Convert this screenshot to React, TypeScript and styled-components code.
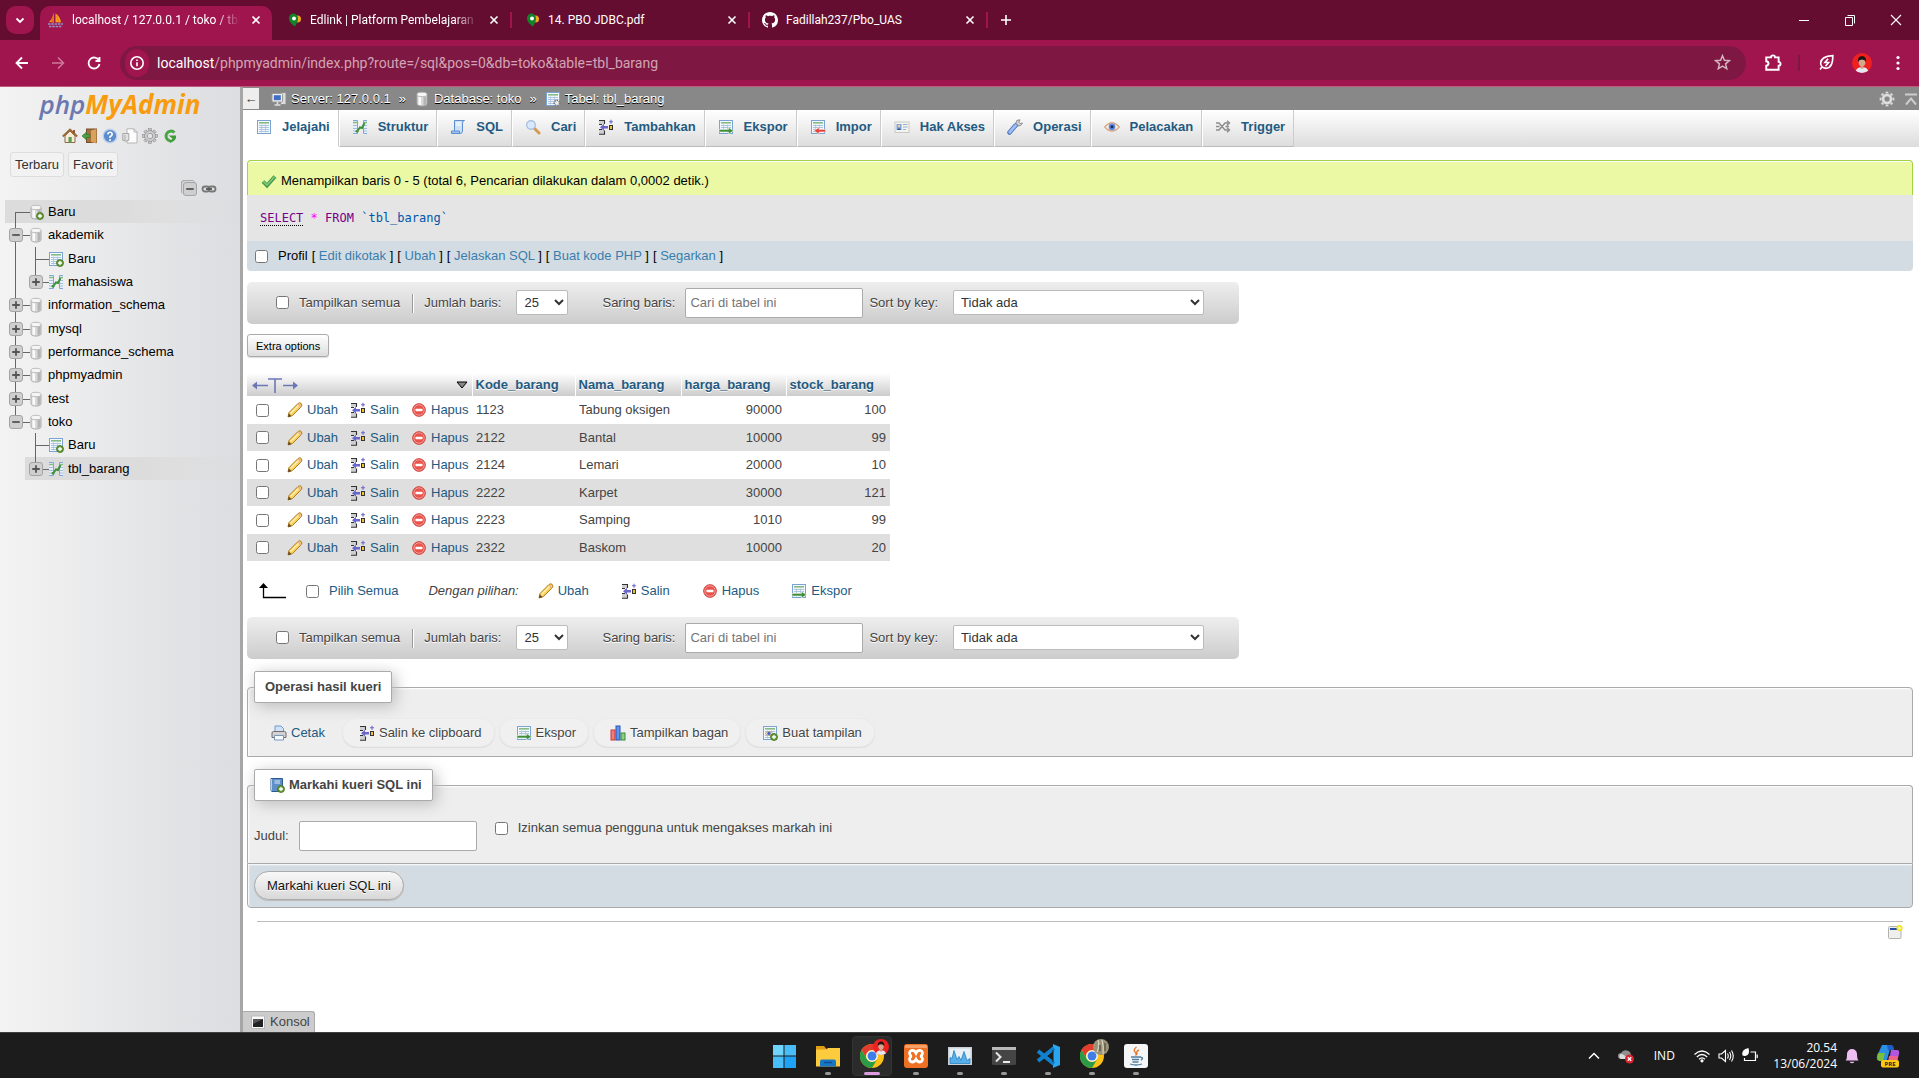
import React, { ReactNode } from "react";
import styled, { createGlobalStyle, css } from "styled-components";

const GlobalStyle = createGlobalStyle`
  * { box-sizing: border-box; }
  body {
    margin: 0;
    background: #fff;
    color: #444;
    font: 13px/18px "Liberation Sans", Arial, sans-serif;
  }
  button, input, select { font: inherit; color: inherit; margin: 0; }
  button { cursor: pointer; }
  a { color: #235a81; text-decoration: none; }
`;

/* ---------- icons ---------- */

type IconName =
  | "db" | "dbNew" | "table" | "tableNew" | "structure" | "sql" | "search" | "insert" | "export"
  | "import" | "rights" | "wrench" | "eye" | "trigger" | "server" | "tableGear" | "home" | "exit"
  | "help" | "docs" | "gear" | "reload" | "link" | "check" | "pencil" | "delete" | "print"
  | "chart" | "view" | "bookmark" | "console" | "window" | "gearLight" | "toTop";

const PlusBadge = () => (
  <g>
    <circle cx="12" cy="12" r="3.5" fill="#6a9c3c" stroke="#41731c" strokeWidth=".8" />
    <path d="M12 10v4M10 12h4" stroke="#fff" strokeWidth="1.3" />
  </g>
);

const Cylinder = () => (
  <g>
    <path d="M3 3.5v9.3c0 3 10 3 10 0V3.5z" fill="#d9d9d9" stroke="#a6a6a6" strokeWidth=".9" />
    <path d="M4.5 5.5v8q1.5.8 2.5.8v-8z" fill="#fafafa" />
    <path d="M9.5 6v8.2q1.8-.2 2.7-.9V5z" fill="#b4b4b4" />
    <ellipse cx="8" cy="3.5" rx="5" ry="2.2" fill="#f6f6f6" stroke="#b5b5b5" strokeWidth=".9" />
  </g>
);

const Sheet = () => (
  <g>
    <rect x="1.5" y="1.5" width="13" height="13" fill="#f4f8fc" stroke="#7ba3d3" />
    <rect x="3" y="3" width="10" height="1.6" fill="#86bb83" />
    <path d="M3 6.5h10M3 8.5h10M3 10.5h10M3 12.5h10" stroke="#a3bedd" strokeWidth=".9" />
    <path d="M5.500 5.500v8M9.500 5.500v8" stroke="#a3bedd" strokeWidth=".7" />
  </g>
);

const cogTeeth = [0, 45, 90, 135, 180, 225, 270, 315];
const Cog = ({ fill, stroke }: { fill: string; stroke: string }) => (
  <g>
    {cogTeeth.map((a) => (
      <rect key={a} x="6.6" y=".6" width="2.8" height="4" fill={fill} stroke={stroke} strokeWidth=".5" transform={`rotate(${a} 8 8)`} />
    ))}
    <circle cx="8" cy="8" r="4" fill="none" stroke={stroke} strokeWidth="3.4" />
    <circle cx="8" cy="8" r="4" fill="none" stroke={fill} strokeWidth="2.5" />
  </g>
);

const drawings: Record<IconName, ReactNode> = {
  db: <Cylinder />,
  dbNew: <g><Cylinder /><PlusBadge /></g>,
  table: <Sheet />,
  tableNew: <g><Sheet /><PlusBadge /></g>,
  structure: (
    <g>
      <path d="M1 1.5h4.500v13H1M15 1.5h-3.500v13H15" fill="#e6effa" stroke="#7fa8d8" />
      <path d="M1 3.500h4M12 3.500h3" stroke="#86bb83" strokeWidth="1.4" />
      <path d="M1 6.500h4M1 9.500h4M1 12h4M12 6.500h3M12 9.500h3M12 12h3" stroke="#a3bedd" />
      <path d="M5 12.500l3-4 2 .5 2.500-5" fill="none" stroke="#3f9139" strokeWidth="2" />
      <circle cx="5" cy="12.3" r="1.4" fill="#3f9139" />
    </g>
  ),
  sql: (
    <g>
      <path d="M4.500 1.500h10q-2 0-2 2.500v8q0 2.500-2.500 2.500h-8q2.500-.5 2.500-3z" fill="#cfe1f6" stroke="#5b8fd0" />
      <path d="M1.500 12h8v2.500h-8z" fill="#9fc2ec" stroke="#5b8fd0" />
      <path d="M6 4h5M6 6h5" stroke="#fff" />
    </g>
  ),
  search: (
    <g>
      <path d="M9.500 9.500l4.500 4.500" stroke="#d59a52" strokeWidth="3" strokeLinecap="round" />
      <circle cx="6" cy="6" r="4.3" fill="#d9e9fb" stroke="#a9c0de" strokeWidth="1.4" />
    </g>
  ),
  insert: (
    <g>
      <path d="M1 1h5v4H1zM1 11h5v4H1z" fill="#cfcfcf" />
      <path d="M1 1.500h6M6.500 1v4M1 5.500h3M1 10.500h3M6.500 11.500v4M1 15.300h6" fill="none" stroke="#333" strokeWidth="1.1" />
      <path d="M2 8.200l4-3.400v2.200h4v2.500H6v2.200z" fill="#6a66cc" />
      <rect x="11.500" y="6.500" width="3" height="4" fill="#f8c22e" stroke="#333" />
      <path d="M13 .8v4M11 2.800h4" stroke="#6a66cc" strokeWidth="1.1" />
    </g>
  ),
  export: (
    <g>
      <Sheet />
      <path d="M1 10.500h9.500V8.500l5 3.300-5 3.200v-2H1z" fill="#3f8f3b" stroke="#e7f2e2" strokeWidth=".6" />
    </g>
  ),
  import: (
    <g>
      <Sheet />
      <path d="M15.500 10.500H9V8.500l-5 3.300L9 15v-2h6.500z" fill="#e5433c" stroke="#fbe3e1" strokeWidth=".6" />
    </g>
  ),
  rights: (
    <g>
      <rect x="1" y="3" width="14" height="10.500" fill="#f3f3f1" stroke="#c9c9c4" />
      <rect x="2.500" y="5" width="5" height="6" fill="#78a4d9" />
      <circle cx="5" cy="7" r="1.3" fill="#f0c7a3" />
      <path d="M3 11q2-3.500 4 0z" fill="#2c5b9a" />
      <path d="M9 5.500h4.500M9 8h4.500M9 10.500h3" stroke="#97b3cf" />
    </g>
  ),
  wrench: (
    <g>
      <path d="M10 7l3.500-.5L15.500 4l-2.300.6-1.400-1.400L13 .8 9.800 1.500 8.500 5z" fill="#d4d4d4" stroke="#8b8b8b" />
      <path d="M2.500 13.500l6-7" stroke="#3f69b8" strokeWidth="4.4" strokeLinecap="round" />
      <path d="M2.700 13.200l5.800-6.700" stroke="#9dbcf2" strokeWidth="3" strokeLinecap="round" />
    </g>
  ),
  eye: (
    <g>
      <path d="M.8 8Q8-.5 15.200 8 8 16 .8 8z" fill="#fbf4ee" stroke="#d9a784" strokeWidth="1.4" />
      <circle cx="8" cy="7.800" r="3.4" fill="#5d86dd" />
      <circle cx="8" cy="7.800" r="1.5" fill="#1d2b4e" />
    </g>
  ),
  trigger: (
    <g fill="none" stroke="#8c8c8c" strokeWidth="1.4">
      <path d="M1 4h3l6 7h4M1 11h3l6-7h4" />
      <path d="M12 1.800L14.500 4 12 6.200M12 8.800l2.500 2.200-2.500 2.200M1 7.500h3.500M10.500 7.500H14" />
    </g>
  ),
  server: (
    <g>
      <rect x="9.500" y="1.500" width="5.500" height="12" fill="#dcdcdc" stroke="#8e8e8e" />
      <rect x="1" y="2.500" width="10.500" height="8.500" rx="1" fill="#f1f1f1" stroke="#9a9a9a" />
      <rect x="2.800" y="4.200" width="7" height="5" fill="#3f6fc4" />
      <path d="M3.500 14h6M6.500 11v3" stroke="#ddd" strokeWidth="1.6" />
    </g>
  ),
  tableGear: (
    <g>
      <Sheet />
      <circle cx="12" cy="12" r="2.7" fill="#eee" stroke="#777" strokeWidth="1.7" strokeDasharray="1.6 .8" />
    </g>
  ),
  home: (
    <g>
      <path d="M3 8v6.500h10V8L8 3z" fill="#f5ecd9" stroke="#8a6d46" />
      <path d="M.8 8.500L8 1.500l7.200 7" fill="none" stroke="#9c6a3a" strokeWidth="1.9" />
      <rect x="6.500" y="9" width="3.200" height="5.500" fill="#5f9d4e" />
      <path d="M12 2v3" stroke="#8a4a2a" strokeWidth="1.8" />
    </g>
  ),
  exit: (
    <g>
      <rect x="4.500" y="1" width="10" height="13.500" fill="#a86f3d" stroke="#77502a" />
      <path d="M9 2.500l5.500-1.500v14.500L9 14z" fill="#d9a25c" />
      <path d="M0 8l4.500-4v2.500H8v3H4.500V12z" fill="#4aa043" stroke="#2f7129" strokeWidth=".6" />
    </g>
  ),
  help: (
    <g>
      <circle cx="8" cy="8" r="6.8" fill="#5c8bd0" stroke="#bdd0ea" strokeWidth="1.4" />
      <path d="M5.800 6.300Q6 4.200 8 4.200t2.200 2Q10.200 7.500 8 8.700V10" fill="none" stroke="#fff" strokeWidth="1.6" />
      <circle cx="8" cy="12" r="1" fill="#fff" />
    </g>
  ),
  docs: (
    <g>
      <path d="M5 .8h7l3 3V15H5z" fill="#fcfcfc" stroke="#b5b5b5" />
      <path d="M12 .8V4h3" fill="none" stroke="#b5b5b5" />
      <path d="M.8 5.500h6v6.800q-3 1.500-6 0z" fill="#e2e2e2" stroke="#a6a6a6" />
      <path d="M3 7v5" stroke="#aaa" />
    </g>
  ),
  gear: <Cog fill="#c9c9c9" stroke="#7f7f7f" />,
  gearLight: <Cog fill="#dedede" stroke="#9a9a9a" />,
  reload: (
    <g>
      <path d="M12.500 4.500A5 5 0 1 0 8 13" fill="none" stroke="#4aa544" strokeWidth="3" />
      <path d="M6.500 7.500H14q1 5-6 7.500v-3q2 0 2.500-1.500z" fill="#3f9a39" />
    </g>
  ),
  link: (
    <g fill="none" stroke="#777" strokeWidth="1.8">
      <rect x="1.500" y="5.500" width="7" height="5" rx="2.5" />
      <rect x="7.500" y="5.500" width="7" height="5" rx="2.5" />
      <path d="M5 8h6" stroke="#555" />
    </g>
  ),
  check: (
    <g>
      <path d="M2 8.500l4 4 8-9" fill="none" stroke="#3e9440" strokeWidth="3.8" />
      <path d="M2.300 8.500L6 12l7.700-8.300" fill="none" stroke="#7cc77a" strokeWidth="1.8" />
    </g>
  ),
  pencil: (
    <g>
      <path d="M1 15l1-4.500L11 1.500q2-1.500 3.200 0t.3 3L5.500 13.500z" fill="#f7cf5a" stroke="#b07d1d" />
      <path d="M3.500 11.500L12 3" stroke="#fdeeb0" strokeWidth="1.6" />
      <path d="M1 15l.8-3.500 2.700 2.700z" fill="#5b4526" />
      <path d="M11 2l3 3" stroke="#e8b0a0" strokeWidth="1.3" />
    </g>
  ),
  delete: (
    <g>
      <circle cx="8" cy="8" r="6.3" fill="#e8534c" stroke="#cf3a34" />
      <circle cx="8" cy="8" r="5.2" fill="none" stroke="#f5a39e" strokeWidth=".9" />
      <rect x="4.500" y="6.800" width="7" height="2.400" rx=".6" fill="#fff" />
    </g>
  ),
  print: (
    <g>
      <path d="M4 1h6l2.500 2.500V8H4z" fill="#cfe2f8" stroke="#6e98cc" />
      <path d="M1 8q0-1.500 1.500-1.500h11Q15 6.500 15 8v4.500H1z" fill="#d2d2d2" stroke="#6f6f6f" />
      <path d="M3.500 10.500h9V15h-9z" fill="#f7fbff" stroke="#7b98b8" />
    </g>
  ),
  chart: (
    <g>
      <rect x="1" y="5" width="4" height="10" fill="#ef7d7d" stroke="#c33c3c" />
      <rect x="6" y="1" width="4" height="14" fill="#5e93ee" stroke="#2455b5" />
      <rect x="11" y="8" width="4" height="7" fill="#8ccf86" stroke="#3d8a37" />
    </g>
  ),
  view: (
    <g>
      <Sheet />
      <path d="M3 8.500q4-4 8.500 0-4.500 4-8.500 0z" fill="#f6e2d2" stroke="#c89b7a" strokeWidth=".8" />
      <circle cx="7" cy="8.400" r="1.700" fill="#3b67c0" />
      <PlusBadge />
    </g>
  ),
  bookmark: (
    <g>
      <path d="M2 1.500h11.500v13H3q-1-.3-1-1.500z" fill="#5f8fc7" stroke="#2f5a8f" />
      <path d="M2.500 2v11.500" stroke="#b7d0ee" />
      <path d="M5.500 4h5.500M5.500 6h5.500" stroke="#dce9f8" />
      <PlusBadge />
    </g>
  ),
  console: (
    <g>
      <rect x="1.500" y="2" width="13" height="12.500" fill="#fafafa" stroke="#b9b9b9" />
      <rect x="3" y="5" width="10" height="8" fill="#222" />
      <path d="M3 5h10L3 10z" fill="#555" />
    </g>
  ),
  window: (
    <g>
      <rect x="1.500" y="2.500" width="12.500" height="12" rx="1" fill="#efefef" stroke="#b3b3ae" />
      <rect x="3" y="4" width="8" height="2" fill="#2350a8" />
      <circle cx="12.500" cy="4" r="2.300" fill="#fff9b0" stroke="#f3e51c" strokeWidth="1.6" />
    </g>
  ),
  toTop: <path d="M2 3.500h12M3 13.500L8 7.500l5 6" fill="none" stroke="#ccc" strokeWidth="2" />,
};

const Svg = styled.svg`
  display: block;
  flex: none;
`;

const Icon = ({ name, size = 16 }: { name: IconName; size?: number }) => (
  <Svg width={size} height={size} viewBox="0 0 16 16" aria-hidden="true">{drawings[name]}</Svg>
);

/* ---------- browser chrome ---------- */

const Screen = styled.div`
  display: flex;
  flex-direction: column;
  min-height: 100vh;
`;

const chromeFont = css`
  font-family: Roboto, "Noto Sans", sans-serif;
`;

const TabStrip = styled.div`
  ${chromeFont}
  display: flex;
  align-items: flex-end;
  height: 40px;
  padding-left: 6px;
  background: #650d31;
  color: #fff;
  font-size: 12px;
`;

const PlainButton = styled.button<{ $w?: number; $h?: number }>`
  display: flex;
  align-items: center;
  justify-content: center;
  flex: none;
  width: ${(p) => p.$w ?? 16}px;
  height: ${(p) => p.$h ?? 16}px;
  padding: 0;
  border: 0;
  background: none;
  color: inherit;
`;

const TabSearch = styled(PlainButton)`
  align-self: center;
  margin-right: 2px;
  border-radius: 10px;
  background: #a1154f;
`;

const BrowserTab = styled.div<{ $active?: boolean; $line?: boolean }>`
  position: relative;
  display: flex;
  align-items: center;
  gap: 8px;
  width: 238px;
  height: 34px;
  padding: 0 10px 6px 12px;
  &::before {
    content: "";
    position: absolute;
    z-index: 0;
    inset: 0 2px 0 4px;
    border-radius: 10px 10px 0 0;
    background: ${(p) => (p.$active ? "#a1154f" : "none")};
  }
  &::after {
    content: "";
    position: absolute;
    right: 0;
    top: 6px;
    width: 2px;
    height: 16px;
    background: ${(p) => (p.$line ? "#a1154f" : "none")};
  }
  > * { position: relative; }
`;

const TabTitle = styled.span<{ $fade?: boolean }>`
  flex: 1;
  min-width: 0;
  white-space: nowrap;
  line-height: 18px;
  ${(p) => p.$fade && css`mask-image: linear-gradient(90deg, #000 86%, transparent);`}
`;

const WindowControls = styled.div`
  display: flex;
  margin-left: auto;
  align-self: flex-start;
`;

const Toolbar = styled.div`
  ${chromeFont}
  display: flex;
  align-items: center;
  height: 47px;
  padding: 0 3px 1px 4px;
  border-bottom: 1px solid #c2577f;
  background: #a1154f;
  color: #fff;
`;

const Omnibox = styled.div`
  display: flex;
  align-items: center;
  flex: 1;
  height: 34px;
  margin: 0 9px 0 8px;
  padding: 0 13px 0 5px;
  border-radius: 17px;
  background: #7e1842;
`;

const InfoDot = styled(PlainButton)`
  border-radius: 14px;
  background: #a1154f;
`;

const Address = styled.div`
  flex: 1;
  padding-left: 8px;
  color: #d3a3b5;
  font-size: 14px;
  line-height: 20px;
  b { color: #fff; font-weight: 400; }
`;

const ToolbarLine = styled.span`
  width: 2px;
  height: 16px;
  margin: 0 8px 0 7px;
  background: #7e1842;
`;

const stroke = (d: string, size = 16, width = 1.6, color = "currentColor") => (
  <Svg width={size} height={size} viewBox="0 0 16 16" fill="none" stroke={color} strokeWidth={width} aria-hidden="true"><path d={d} /></Svg>
);

const Sail = () => (
  <Svg width="16" height="16" viewBox="0 0 16 16" aria-hidden="true">
    <path d="M6 .5v10L1 10Q5 6 6 .5zM7.500 1.500Q12 4 13 10.500l-5.500-.3z" fill="#f6a21a" />
    <path d="M5.500 3v7L3 9.700zM8.500 4l2 6" fill="#e0691b" stroke="#e0691b" strokeWidth=".6" />
    <path d="M0 12h15M1 14.500h13" stroke="#8e93c9" strokeWidth="1.6" strokeDasharray="2.5 .8" />
  </Svg>
);

const EdPin = () => (
  <Svg width="16" height="16" viewBox="0 0 16 16" aria-hidden="true">
    <circle cx="11.500" cy="7" r="3.5" fill="#f2a51e" />
    <path d="M7 1.500a5 5 0 0 1 5 5q0 3-3 8-6-4-6-8a4.500 4.500 0 0 1 4-5z" fill="#12822b" />
    <circle cx="8" cy="6.500" r="2" fill="#fff" />
  </Svg>
);

const OctoCat = () => (
  <Svg width="16" height="16" viewBox="0 0 16 16" fill="#fff" aria-hidden="true">
    <path d="M8 0C3.580 0 0 3.580 0 8c0 3.540 2.290 6.530 5.470 7.590.4.070.55-.17.55-.38 0-.19-.01-.82-.01-1.490-2.010.37-2.530-.49-2.690-.94-.09-.23-.48-.94-.82-1.130-.28-.15-.68-.52-.01-.53.63-.01 1.080.58 1.230.82.72 1.210 1.870.87 2.330.66.07-.52.28-.87.51-1.070-1.780-.2-3.640-.89-3.640-3.950 0-.87.31-1.590.82-2.150-.08-.2-.36-1.020.08-2.120 0 0 .67-.21 2.200.82.64-.18 1.320-.27 2-.27s1.360.09 2 .27c1.530-1.040 2.200-.82 2.200-.82.44 1.100.16 1.920.08 2.120.51.56.82 1.270.82 2.150 0 3.070-1.870 3.750-3.650 3.950.29.25.54.73.54 1.480 0 1.070-.01 1.930-.01 2.200 0 .21.15.46.55.38A8.010 8.010 0 0 0 16 8c0-4.420-3.580-8-8-8z" />
  </Svg>
);

const Portrait = ({ size = 20 }: { size?: number }) => (
  <Svg width={size} height={size} viewBox="0 0 20 20" aria-hidden="true">
    <clipPath id={`portrait${size}`}><circle cx="10" cy="10" r="10" /></clipPath>
    <g clipPath={`url(#portrait${size})`}>
      <rect width="20" height="20" fill="#ee2020" />
      <path d="M3 20q1-6 7-6t7 6z" fill="#e6e8f0" />
      <rect x="8.500" y="11" width="3" height="4.500" fill="#c99a80" />
      <ellipse cx="10" cy="9" rx="3.400" ry="4.300" fill="#d5a88e" />
      <path d="M6 9Q5.500 3 10 3t4 6Q13 6.500 10 6.500T6 9z" fill="#1d1513" />
    </g>
  </Svg>
);

const browserTabs: { title: string; icon: ReactNode; active?: boolean; line?: boolean; fade?: boolean }[] = [
  { title: "localhost / 127.0.0.1 / toko / tbl_", icon: <Sail />, active: true, fade: true },
  { title: "Edlink | Platform Pembelajaran I", icon: <EdPin />, line: true, fade: true },
  { title: "14. PBO JDBC.pdf", icon: <EdPin />, line: true },
  { title: "Fadillah237/Pbo_UAS", icon: <OctoCat />, line: true },
];

const BrowserChrome = () => (
  <header>
    <TabStrip>
      <TabSearch $w={28} $h={28} aria-label="Search tabs">{stroke("M4.500 6.500L8 10l3.500-3.500", 16, 1.8)}</TabSearch>
      {browserTabs.map((t) => (
        <BrowserTab key={t.title} $active={t.active} $line={t.line}>
          {t.icon}
          <TabTitle $fade={t.fade}>{t.title}</TabTitle>
          <PlainButton aria-label="Close tab">{stroke("M4.500 4.500l7 7M11.500 4.500l-7 7", 16, 1.6)}</PlainButton>
        </BrowserTab>
      ))}
      <PlainButton $w={36} $h={40} aria-label="New tab">{stroke("M8 3v10M3 8h10", 16, 1.6)}</PlainButton>
      <WindowControls>
        <PlainButton $w={46} $h={40} aria-label="Minimize">{stroke("M3 8.500h10", 16, 1)}</PlainButton>
        <PlainButton $w={46} $h={40} aria-label="Restore">{stroke("M3.500 5.500h7v8h-7zM5.500 3.500h7v8", 16, 1)}</PlainButton>
        <PlainButton $w={46} $h={40} aria-label="Close">{stroke("M3 3l10 10M13 3L3 13", 16, 1.1)}</PlainButton>
      </WindowControls>
    </TabStrip>
    <Toolbar>
      <PlainButton $w={36} $h={34} aria-label="Back">{stroke("M14 8H3M8 2.500L2.500 8 8 13.500", 16, 1.8)}</PlainButton>
      <PlainButton $w={36} $h={34} aria-label="Forward">{stroke("M2 8h11M8 2.500L13.500 8 8 13.500", 16, 1.5, "#cd7a9b")}</PlainButton>
      <PlainButton $w={36} $h={34} aria-label="Reload">{stroke("M13 5.500A5.500 5.500 0 1 0 13.500 9M13.500 2v4h-4", 16, 1.8)}</PlainButton>
      <Omnibox>
        <InfoDot $w={24} $h={28} aria-label="Site information">
          <Svg width="16" height="16" viewBox="0 0 16 16" fill="none" stroke="#fff" strokeWidth="1.6"><circle cx="8" cy="8" r="6.2" /><path d="M8 7.200v4M8 4.500v1.500" /></Svg>
        </InfoDot>
        <Address><b>localhost</b>/phpmyadmin/index.php?route=/sql&amp;pos=0&amp;db=toko&amp;table=tbl_barang</Address>
        <PlainButton $w={22} $h={22} aria-label="Bookmark">
          {stroke("M8 1.600l1.800 4.300 4.700.4-3.600 3 1.100 4.600L8 11.400l-4 2.500 1.100-4.600-3.600-3 4.700-.4z", 17, 1.4, "#d5b4c1")}
        </PlainButton>
      </Omnibox>
      <PlainButton $w={36} $h={34} aria-label="Extensions">
        {stroke("M2 3h4.200a1.800 1.800 0 0 1 3.600 0H13v4a1.700 1.700 0 0 1 0 3.400V14H2v-3.500q2-.3 2-2T2 6.500z", 18, 1.7)}
      </PlainButton>
      <ToolbarLine />
      <PlainButton $w={36} $h={34} aria-label="Energy saver">
        {stroke("M14 1.500Q3 2 2.500 8.500 2.500 13 7.500 13.500 14 13.500 14 1.500zM3.500 12.500L2 14.500M9.500 4.500l-3 3.500h3.500l-3 3.500", 17, 1.5)}
      </PlainButton>
      <PlainButton $w={36} $h={34} aria-label="Profile"><Portrait /></PlainButton>
      <PlainButton $w={36} $h={34} aria-label="Menu">
        <Svg width="4" height="16" viewBox="0 0 4 16" fill="#fff"><circle cx="2" cy="2.500" r="1.6" /><circle cx="2" cy="8" r="1.6" /><circle cx="2" cy="13.500" r="1.6" /></Svg>
      </PlainButton>
    </Toolbar>
  </header>
);

/* ---------- navigation panel ---------- */

const Body = styled.div`
  display: flex;
  flex: 1;
`;

const Sidebar = styled.aside`
  flex: none;
  width: 243px;
  border-right: 3px solid #a6a6a6;
  background: linear-gradient(90deg, #f3f3f3, #dcdde0);
  color: #000;
`;

const Logo = styled.a`
  display: block;
  height: 39px;
  text-align: center;
  color: #f89c0e;
  font: italic 700 26px/34px "Open Sans", "Noto Sans", sans-serif;
  span { color: #6c78af; font-weight: 600; }
`;

const QuickLinks = styled.nav`
  display: flex;
  justify-content: center;
  gap: 4px;
  margin-top: 2px;
  a { display: block; }
`;

const RecentBar = styled.div`
  display: flex;
  gap: 4px;
  margin: 8px 0 0 10px;
`;

const SoftButton = styled.button`
  height: 25px;
  padding: 0 4px;
  border: 1px solid #ddd;
  border-radius: 3px;
  background: #f2f2f2;
  color: #333;
`;

const TreeTools = styled.div`
  display: flex;
  align-items: center;
  justify-content: flex-end;
  gap: 4px;
  height: 23px;
  padding-right: 23px;
`;

const Fold = styled.button<{ $stack?: boolean }>`
  display: flex;
  align-items: center;
  justify-content: center;
  width: 14px;
  height: 14px;
  padding: 0;
  border: 1px solid #a4a4a4;
  border-radius: 3px;
  background: #cfcfcf;
  color: #555;
  ${(p) => p.$stack && css`box-shadow: -1px -1px 0 #d8d8d8, -2px -2px 0 #aaa;`}
`;

const Tree = styled.ul`
  margin: 0;
  padding: 0 0 0 5px;
  list-style: none;
`;

const TreeRow = styled.li<{ $mark?: boolean; $child?: boolean }>`
  display: flex;
  align-items: center;
  height: 23px;
  padding-left: 1px;
  ${(p) => p.$mark && css`
    background: linear-gradient(90deg, #dcdcdc, #dcdcdc 50%, transparent) no-repeat ${p.$child ? 20 : 0}px 0;
  `}
  &:nth-child(3n + 2) { height: 24px; }
  a { color: #000; margin-left: 4px; }
`;

type RailKind = "top" | "mid" | "end" | "pass" | "none";

const railSpan: Record<RailKind, string> = {
  top: "50% auto 0",
  mid: "0 auto 0",
  pass: "0 auto 0",
  end: "0 auto 50%",
  none: "0",
};

/* One indent step of the tree, with its vertical and horizontal connector lines */
const Rail = styled.span<{ $kind: RailKind }>`
  position: relative;
  display: flex;
  align-items: center;
  justify-content: center;
  flex: none;
  align-self: stretch;
  width: 20px;
  &::before {
    content: "";
    position: absolute;
    inset: ${(p) => railSpan[p.$kind]};
    left: 9px;
    border-left: ${(p) => (p.$kind === "none" ? 0 : 1)}px solid #666;
  }
  &::after {
    content: "";
    position: absolute;
    top: 50%;
    left: 9px;
    width: 15px;
    border-top: ${(p) => (p.$kind === "none" || p.$kind === "pass" ? 0 : 1)}px solid #666;
  }
  ${Fold} { position: relative; z-index: 1; }
`;

const TreeIcon = styled.span`
  position: relative;
  padding-left: 2px;
`;

const FoldSign = ({ open }: { open?: boolean }) => stroke(open ? "M3 8h10" : "M3 8h10M8 3v10", 12, 2.4);

type Node = { label: string; icon: IconName; rails: RailKind[]; fold?: "open" | "closed"; mark?: boolean };

const nodes: Node[] = [
  { label: "Baru", icon: "dbNew", rails: ["top"], mark: true },
  { label: "akademik", icon: "db", rails: ["mid"], fold: "open" },
  { label: "Baru", icon: "tableNew", rails: ["pass", "mid"] },
  { label: "mahasiswa", icon: "structure", rails: ["pass", "end"], fold: "closed" },
  { label: "information_schema", icon: "db", rails: ["mid"], fold: "closed" },
  { label: "mysql", icon: "db", rails: ["mid"], fold: "closed" },
  { label: "performance_schema", icon: "db", rails: ["mid"], fold: "closed" },
  { label: "phpmyadmin", icon: "db", rails: ["mid"], fold: "closed" },
  { label: "test", icon: "db", rails: ["mid"], fold: "closed" },
  { label: "toko", icon: "db", rails: ["end"], fold: "open" },
  { label: "Baru", icon: "tableNew", rails: ["none", "mid"] },
  { label: "tbl_barang", icon: "structure", rails: ["none", "end"], fold: "closed", mark: true },
];

const Navigation = () => (
  <Sidebar>
    <Logo href="#home"><span>php</span>MyAdmin</Logo>
    <QuickLinks>
      {(["home", "exit", "help", "docs", "gear", "reload"] as IconName[]).map((n) => (
        <a key={n} href={`#${n}`} aria-label={n}><Icon name={n} /></a>
      ))}
    </QuickLinks>
    <RecentBar>
      <SoftButton>Terbaru</SoftButton>
      <SoftButton>Favorit</SoftButton>
    </RecentBar>
    <TreeTools>
      <Fold $stack aria-label="Collapse all"><FoldSign open /></Fold>
      <PlainButton aria-label="Unlink from main panel"><Icon name="link" /></PlainButton>
    </TreeTools>
    <Tree>
      {nodes.map((n, i) => (
        <TreeRow key={i} $mark={n.mark} $child={n.rails.length > 1}>
          {n.rails.map((r, j) => (
            <Rail key={j} $kind={r}>
              {n.fold && j === n.rails.length - 1 && (
                <Fold aria-label={`Toggle ${n.label}`}><FoldSign open={n.fold === "open"} /></Fold>
              )}
            </Rail>
          ))}
          <TreeIcon><Icon name={n.icon} /></TreeIcon>
          <a href={`#${n.label}`}>{n.label}</a>
        </TreeRow>
      ))}
    </Tree>
  </Sidebar>
);

/* ---------- main panel ---------- */

const Main = styled.main`
  display: flex;
  flex-direction: column;
  flex: 1;
  min-width: 0;
`;

const Breadcrumb = styled.div`
  display: flex;
  align-items: center;
  gap: 4px;
  height: 23px;
  background: #888;
  color: #fff;
  text-shadow: 0 1px 0 #000;
  a { display: flex; align-items: center; gap: 4px; color: inherit; }
`;

const BackToggle = styled.button`
  width: 16px;
  height: 21px;
  margin-right: 8px;
  padding: 0;
  border: 0;
  background: #eee;
  color: #333;
  line-height: 20px;
`;

const Angle = styled.span`
  padding: 0 4px;
`;

const BarTools = styled.div`
  display: flex;
  gap: 8px;
  margin-left: auto;
`;

const TopMenu = styled.nav`
  display: flex;
  height: 37px;
  background: linear-gradient(#fff, #dcdcdc);
`;

const MenuTab = styled.a<{ $active?: boolean }>`
  display: flex;
  align-items: center;
  gap: 10px;
  padding: 0 8px 2px 12px;
  border-left: 1px solid ${(p) => (p.$active ? "transparent" : "#fff")};
  border-right: 1px solid #ccc;
  border-bottom: 1px solid ${(p) => (p.$active ? "#fff" : "#bbb")};
  background: ${(p) => (p.$active ? "#fff" : "none")};
  font-weight: 700;
`;

const Content = styled.div`
  padding: 13px 6px 0 4px;
`;

const Success = styled.div`
  display: flex;
  align-items: center;
  gap: 4px;
  height: 35px;
  padding: 6px 0 0 13px;
  border: solid #a2d246;
  border-width: 1px 1px 0;
  border-radius: 4px 4px 0 0;
  background: #ebf8a4;
  box-shadow: inset 0 1px 1px #fff;
  color: #000;
`;

const SqlBox = styled.pre`
  margin: 0;
  height: 46px;
  padding: 14px 13px;
  background: #e5e5e5;
  font: 12px/18px "DejaVu Sans Mono", monospace;
  color: #708;
  a { color: #708; border-bottom: 1px dotted #000; }
  i { color: #f0f; font-style: normal; }
  b { color: #05a; font-weight: 400; }
`;

const SqlTools = styled.div`
  display: flex;
  align-items: center;
  gap: 4px;
  height: 30px;
  padding-left: 8px;
  border-radius: 0 0 4px 4px;
  background: #d3dce3;
  color: #000;
  a { color: #3a7ead; }
  label { display: flex; align-items: center; gap: 10px; }
`;

const Check = styled.input.attrs({ type: "checkbox" })`
  flex: none;
  width: 13px;
  height: 13px;
`;

const NavForm = styled.form`
  display: flex;
  align-items: center;
  width: 992px;
  max-width: 100%;
  height: 42px;
  margin-top: 11px;
  padding: 0 0 1px 29px;
  border-radius: 5px;
  background: linear-gradient(#eee, #ccc);
  text-shadow: 0 1px 0 #fff;
`;

const CheckLabel = styled.label`
  display: flex;
  align-items: center;
  gap: 10px;
`;

const Divider = styled.span`
  width: 2px;
  height: 19px;
  margin: 2px 10px 0 12px;
  border-left: 1px solid #999;
  border-right: 1px solid #fff;
`;

const Choice = styled.select<{ $w: number }>`
  width: ${(p) => p.$w}px;
  height: 25px;
  padding: 0 3px;
  border: 1px solid #bbb;
  border-radius: 2px;
  background: #fff;
  color: #333;
`;

const TextBox = styled.input`
  width: 178px;
  height: 30px;
  padding: 0 4px;
  border: 1px solid #aaa;
  border-radius: 2px;
  background: #fff;
  &::placeholder { color: #757575; }
`;

const FieldLabel = styled.label<{ $before?: number; $after?: number }>`
  padding: 0 ${(p) => p.$after ?? 0}px 0 ${(p) => p.$before ?? 0}px;
`;

const PagerForm = ({ id }: { id: string }) => (
  <NavForm>
    <CheckLabel><Check /> Tampilkan semua</CheckLabel>
    <Divider />
    <FieldLabel htmlFor={`${id}-rows`} $after={15}>Jumlah baris:</FieldLabel>
    <Choice id={`${id}-rows`} $w={52} defaultValue="25"><option>25</option><option>50</option></Choice>
    <FieldLabel htmlFor={`${id}-filter`} $before={34} $after={10}>Saring baris:</FieldLabel>
    <TextBox id={`${id}-filter`} placeholder="Cari di tabel ini" />
    <FieldLabel htmlFor={`${id}-sort`} $before={6} $after={15}>Sort by key:</FieldLabel>
    <Choice id={`${id}-sort`} $w={251}><option>Tidak ada</option></Choice>
  </NavForm>
);

const ExtraButton = styled.button`
  display: block;
  height: 23px;
  margin: 10px 0 16px;
  padding: 0 8px;
  border: 1px solid #aaa;
  border-radius: 3px;
  background: linear-gradient(#fff, #ddd);
  box-shadow: 0 1px 1px #ddd;
  color: #000;
  font-size: 11px;
`;

const DataTable = styled.table`
  width: 643px;
  table-layout: fixed;
  border-collapse: collapse;
  th {
    height: 23px;
    padding: 0 3px;
    border-left: 1px solid #fff;
    background: linear-gradient(#fff, #ccc);
    text-align: left;
    text-shadow: 0 1px 0 #fff;
  }
  th:first-child { border-left: 0; padding: 0 4px; }
  td { height: 27px; padding: 0 4px; }
  td:first-child { padding-left: 9px; }
  tbody tr:nth-child(odd) td { height: 28px; }
  tbody tr:nth-child(even) { background: #dfdfdf; }
`;

const Num = styled.td`
  text-align: right;
`;

const HeadTools = styled.div`
  display: flex;
  align-items: center;
  justify-content: space-between;
`;

const IconLink = styled.a`
  display: flex;
  align-items: center;
  gap: 4px;
`;

const rows: [string, string, number, number][] = [
  ["1123", "Tabung oksigen", 90000, 100],
  ["2122", "Bantal", 10000, 99],
  ["2124", "Lemari", 20000, 10],
  ["2222", "Karpet", 30000, 121],
  ["2223", "Samping", 1010, 99],
  ["2322", "Baskom", 10000, 20],
];

const columnWidths = [36, 63, 61, 65, 103, 106, 105, 104];
const Col = styled.col<{ $w: number }>`
  width: ${(p) => p.$w}px;
`;

const Results = () => (
  <DataTable>
    <colgroup>{columnWidths.map((w, i) => <Col key={i} $w={w} />)}</colgroup>
    <thead>
      <tr>
        <th colSpan={4}>
          <HeadTools>
            <Svg width="48" height="16" viewBox="0 0 48 16" fill="none" stroke="#6c78b5" strokeWidth="1.6" aria-hidden="true">
              <path d="M4 8.500h13M32 8.500h12M17 2h14M24 2v14" />
              <path d="M6 4.500v8l-5-4zM42 4.500v8l5-4z" fill="#6c78b5" stroke="none" />
            </Svg>
            <Svg width="12" height="8" viewBox="0 0 12 8" aria-hidden="true"><path d="M1 1h10L6 7z" fill="#888" stroke="#000" /></Svg>
          </HeadTools>
        </th>
        {["Kode_barang", "Nama_barang", "harga_barang", "stock_barang"].map((h) => (
          <th key={h} scope="col"><a href={`#${h}`}>{h}</a></th>
        ))}
      </tr>
    </thead>
    <tbody>
      {rows.map(([code, name, price, stock]) => (
        <tr key={code}>
          <td><HeadTools><Check aria-label={`Pilih ${code}`} /></HeadTools></td>
          <td><IconLink href="#edit"><Icon name="pencil" />Ubah</IconLink></td>
          <td><IconLink href="#copy"><Icon name="insert" />Salin</IconLink></td>
          <td><IconLink href="#delete"><Icon name="delete" />Hapus</IconLink></td>
          <td>{code}</td>
          <td>{name}</td>
          <Num>{price}</Num>
          <Num>{stock}</Num>
        </tr>
      ))}
    </tbody>
  </DataTable>
);

const BulkBar = styled.div`
  display: flex;
  align-items: center;
  height: 56px;
  margin-bottom: -11px;
  padding: 4px 0 0 11px;
  label { margin-left: 19px; color: #235a81; }
  em { margin: 0 19px 0 30px; }
`;

const BulkLinks = styled.div`
  display: flex;
  gap: 32px;
`;

const Panel = styled.fieldset<{ $open?: boolean }>`
  min-width: 0;
  margin: 12px 0 0;
  padding: ${(p) => (p.$open ? "20px 6px 12px" : "15px 6px 9px")};
  border: 1px solid #aaa;
  border-bottom-width: ${(p) => (p.$open ? 0 : 1)}px;
  border-radius: 4px 4px 0 0;
  background: #eee;
  box-shadow: inset 1px 1px 2px #fff;
`;

const PanelTitle = styled.legend`
  padding: 0;
  span {
    display: flex;
    align-items: center;
    gap: 4px;
    height: 32px;
    padding: 0 10px;
    border: 1px solid #aaa;
    border-radius: 2px;
    background: #fff;
    box-shadow: 3px 3px 15px #bbb;
    font-weight: 700;
  }
  svg { margin-left: 4px; }
`;

const Actions = styled.div`
  display: flex;
  align-items: center;
  gap: 4px;
  > a { padding: 0 13px 0 17px; }
`;

const PillButton = styled.button<{ $strong?: boolean }>`
  display: flex;
  align-items: center;
  gap: 4px;
  height: 29px;
  padding: 0 12px 0 ${(p) => (p.$strong ? 12 : 16)}px;
  border: 1px solid ${(p) => (p.$strong ? "#aaa" : "#ebebeb")};
  border-radius: 15px;
  background: ${(p) => (p.$strong ? "linear-gradient(#f8f8f8, #d8d8d8)" : "#f0f0f0")};
  box-shadow: 0 1px 1px ${(p) => (p.$strong ? "#bbb" : "#ddd")};
  color: ${(p) => (p.$strong ? "#111" : "#444")};
  text-shadow: 0 1px 0 #fff;
`;

const BookmarkRow = styled.div`
  display: flex;
  align-items: flex-start;
  height: 30px;
  ${CheckLabel} { line-height: 14px; }
`;

const TitleLabel = styled.label`
  display: flex;
  align-items: center;
  gap: 10px;
  margin-right: 18px;
`;

const PanelFooter = styled.div`
  padding: 7px 6px;
  border: 1px solid #aaa;
  border-radius: 0 0 4px 4px;
  background: #d3dce3;
  box-shadow: inset 1px 1px 2px #fff;
`;

const PageFoot = styled.div`
  display: flex;
  justify-content: flex-end;
  margin: 13px 10px 0 10px;
  padding-top: 2px;
  border-top: 1px solid #bbb;
`;

const ConsoleTab = styled.button`
  display: flex;
  align-items: center;
  gap: 4px;
  align-self: flex-start;
  height: 21px;
  margin-top: auto;
  padding: 0 4px 0 7px;
  border: solid #aaa;
  border-width: 1px 1px 0 0;
  border-radius: 0 3px 0 0;
  background: #ccc;
`;

const menu: [string, IconName][] = [
  ["Jelajahi", "table"], ["Struktur", "structure"], ["SQL", "sql"], ["Cari", "search"], ["Tambahkan", "insert"],
  ["Ekspor", "export"], ["Impor", "import"], ["Hak Akses", "rights"], ["Operasi", "wrench"],
  ["Pelacakan", "eye"], ["Trigger", "trigger"],
];

const MainPanel = () => (
  <Main>
    <Breadcrumb>
      <BackToggle aria-label="Hide panel">←</BackToggle>
      <a href="#server"><Icon name="server" />Server: 127.0.0.1</a>
      <Angle>»</Angle>
      <a href="#database"><Icon name="db" />Database: toko</a>
      <Angle>»</Angle>
      <a href="#table"><Icon name="tableGear" />Tabel: tbl_barang</a>
      <BarTools>
        <PlainButton aria-label="Page settings"><Icon name="gearLight" /></PlainButton>
        <PlainButton aria-label="Back to top"><Icon name="toTop" /></PlainButton>
      </BarTools>
    </Breadcrumb>
    <TopMenu>
      {menu.map(([label, icon], i) => (
        <MenuTab key={label} href={`#${label}`} $active={i === 0}><Icon name={icon} />{label}</MenuTab>
      ))}
    </TopMenu>
    <Content>
      <Success><Icon name="check" />Menampilkan baris 0 - 5 (total 6, Pencarian dilakukan dalam 0,0002 detik.)</Success>
      <SqlBox><a href="#select">SELECT</a> <i>*</i> FROM <b>`tbl_barang`</b></SqlBox>
      <SqlTools>
        <label><Check /> Profil</label>
        {["Edit dikotak", "Ubah", "Jelaskan SQL", "Buat kode PHP", "Segarkan"].map((t) => (
          <span key={t}>[ <a href={`#${t}`}>{t}</a> ]</span>
        ))}
      </SqlTools>
      <PagerForm id="top" />
      <ExtraButton>Extra options</ExtraButton>
      <Results />
      <BulkBar>
        <Svg width="29" height="16" viewBox="0 0 29 16" aria-hidden="true">
          <path d="M5.500 3v11.500H28" fill="none" stroke="#000" strokeWidth="1.3" /><path d="M5.500 0l4.500 5H1z" />
        </Svg>
        <CheckLabel><Check /> Pilih Semua</CheckLabel>
        <em>Dengan pilihan:</em>
        <BulkLinks>
          <IconLink href="#edit"><Icon name="pencil" />Ubah</IconLink>
          <IconLink href="#copy"><Icon name="insert" />Salin</IconLink>
          <IconLink href="#delete"><Icon name="delete" />Hapus</IconLink>
          <IconLink href="#export"><Icon name="export" />Ekspor</IconLink>
        </BulkLinks>
      </BulkBar>
      <PagerForm id="bottom" />
      <Panel>
        <PanelTitle><span>Operasi hasil kueri</span></PanelTitle>
        <Actions>
          <IconLink href="#print"><Icon name="print" />Cetak</IconLink>
          <PillButton><Icon name="insert" />Salin ke clipboard</PillButton>
          <PillButton><Icon name="export" />Ekspor</PillButton>
          <PillButton><Icon name="chart" />Tampilkan bagan</PillButton>
          <PillButton><Icon name="view" />Buat tampilan</PillButton>
        </Actions>
      </Panel>
      <Panel $open>
        <PanelTitle><span><Icon name="bookmark" />Markahi kueri SQL ini</span></PanelTitle>
        <BookmarkRow>
          <TitleLabel>Judul: <TextBox /></TitleLabel>
          <CheckLabel><Check /> Izinkan semua pengguna untuk mengakses markah ini</CheckLabel>
        </BookmarkRow>
      </Panel>
      <PanelFooter><PillButton $strong>Markahi kueri SQL ini</PillButton></PanelFooter>
      <PageFoot><PlainButton aria-label="Open new window"><Icon name="window" /></PlainButton></PageFoot>
    </Content>
    <ConsoleTab><Icon name="console" />Konsol</ConsoleTab>
  </Main>
);

/* ---------- taskbar ---------- */

const Taskbar = styled.footer`
  display: grid;
  grid-template-columns: 1fr auto 1fr;
  align-items: center;
  height: 46px;
  border-top: 1px solid #404040;
  background: #1c1c1c;
  color: #fff;
  font-family: "Open Sans", "Noto Sans", sans-serif;
  font-size: 12px;
`;

const Apps = styled.div`
  grid-column: 2;
  display: flex;
  gap: 4px;
  padding-left: 1px;
`;

const AppButton = styled.button<{ $state?: "running" | "active" }>`
  position: relative;
  display: flex;
  align-items: center;
  justify-content: center;
  width: 40px;
  height: 40px;
  padding: 0;
  border: 1px solid ${(p) => (p.$state === "active" ? "#333" : "transparent")};
  border-radius: 4px;
  background: ${(p) => (p.$state === "active" ? "#2b2b2b" : "none")};
  &::after {
    content: "";
    position: absolute;
    bottom: 0;
    width: ${(p) => (p.$state === "active" ? 16 : 6)}px;
    height: 3px;
    border-radius: 2px;
    background: ${(p) => (p.$state === "active" ? "#dc9de0" : p.$state ? "#989898" : "none")};
  }
`;

const Face = styled.span`
  position: absolute;
  top: 2px;
  right: 2px;
`;

const Tray = styled.div`
  display: flex;
  align-items: center;
  justify-content: flex-end;
  padding-right: 19px;
`;

const TrayItem = styled(PlainButton)<{ $gap?: number }>`
  margin-left: ${(p) => p.$gap ?? 0}px;
`;

const Clock = styled.time`
  margin: 0 7px 0 15px;
  text-align: right;
  line-height: 16px;
`;

const ChromeLogo = () => (
  <Svg width="24" height="24" viewBox="0 0 24 24" aria-hidden="true">
    <circle cx="12" cy="12" r="12" fill="#fbc116" />
    <path d="M1.600 6A12 12 0 0 1 22.400 6H12a6 6 0 0 0-5.200 9z" fill="#e33b2e" />
    <path d="M1.600 6A12 12 0 0 0 12 24l5.200-9A6 6 0 0 1 6.800 15z" fill="#2a9c48" />
    <circle cx="12" cy="12" r="5.800" fill="#fff" />
    <circle cx="12" cy="12" r="4.500" fill="#3f7ee8" />
  </Svg>
);

const svg24 = (children: ReactNode) => <Svg width="24" height="24" viewBox="0 0 24 24" aria-hidden="true">{children}</Svg>;

const apps: { name: string; state?: "running" | "active"; art: ReactNode }[] = [
  { name: "Start", art: svg24(<g fill="#48bdf8"><path d="M1 1h10.500v10.500H1z" fill="#6fd4fb" /><path d="M12.500 1H24v10.500H12.500zM1 12.500h10.500V24H1z" /><path d="M12.500 12.500H24V24H12.500z" fill="#1ea2f5" /></g>) },
  { name: "Files", state: "running", art: svg24(<g><path d="M0 2h8l2.500 3H24v6H0z" fill="#e09c12" /><path d="M0 5.500h10L12 4h12v18.500H0z" fill="#fccb3e" /><path d="M4 22.500v-5q0-2 2-2h12q2 0 2 2v5z" fill="#1677c4" /><path d="M8 18.500h8" stroke="#0c4f91" strokeWidth="1.5" /></g>) },
  { name: "Chrome", state: "active", art: <><ChromeLogo /><Face><Portrait size={16} /></Face></> },
  { name: "XAMPP", state: "running", art: svg24(<g><rect width="24" height="24" rx="3" fill="#ee7023" /><rect x="1" y="1" width="22" height="3" rx="1" fill="#f6a068" /><path d="M7.500 6.500q3-.5 4.500 2.500 1.500-3 4.500-2.500a2.800 2.800 0 0 1 1.300 4.500q-1.300 1.200 0 2.400a2.800 2.800 0 0 1-1.300 4.500q-3 .5-4.500-2.500-1.500 3-4.500 2.500a2.800 2.800 0 0 1-1.300-4.500q1.300-1.200 0-2.400A2.800 2.800 0 0 1 7.500 6.500z" fill="none" stroke="#fff" strokeWidth="2.8" /></g>) },
  { name: "Monitor", state: "running", art: svg24(<g><rect y="3" width="24" height="18" fill="#c9cfd4" /><rect x="1.500" y="4.500" width="21" height="15" fill="#e8f1f8" /><path d="M2 19.500v-6l2 1 2-8 3 9 2-3 2 4 3-9 3 9 3-2v5z" fill="#57b0ea" stroke="#2a7fc0" strokeWidth=".8" /></g>) },
  { name: "Terminal", state: "running", art: svg24(<g><rect y="3" width="24" height="18" rx="1.500" fill="#454545" /><path d="M0 6V3h24v3z" fill="#b9b9b9" /><path d="M4 8.500l4.500 4.500L4 17.500" fill="none" stroke="#e8e8e8" strokeWidth="2" /><path d="M11 18h7" stroke="#fff" strokeWidth="1.8" /></g>) },
  { name: "Code", state: "running", art: svg24(<g><path d="M17 0l7 3v18l-7 3z" fill="#2aa6f0" /><path d="M18 4L2 17M18 20L2 7" stroke="#1081cf" strokeWidth="4" /><path d="M17 6v12" stroke="#1c1c1c" strokeWidth="1" /></g>) },
  {
    name: "Chrome profile", state: "running", art: <><ChromeLogo /><Face>
      <Svg width="16" height="16" viewBox="0 0 16 16" aria-hidden="true"><circle cx="8" cy="8" r="8" fill="#9b9377" /><path d="M5 1q2 6-1 12M9 1q2 7 1 14" stroke="#d9d4c2" strokeWidth="1.2" fill="none" /><path d="M12 4v8M7 6v6" stroke="#5e5b4b" strokeWidth="1.5" /></Svg>
    </Face></>,
  },
  { name: "Java", state: "running", art: svg24(<g><rect width="24" height="24" rx="3" fill="#f4f6f8" /><path d="M12.500 3q-4 3-1 5.500 1.500 1.500 0 3M15 6q-4 2-1.500 4.500" fill="none" stroke="#e8772e" strokeWidth="1.4" /><path d="M7 13h10M8 15.500h7M8.500 18h6M17 13.500q3 0 0 2.800M6 20q6 2 12 0" fill="none" stroke="#537f9f" strokeWidth="1.3" /></g>) },
];

const WindowsTaskbar = () => (
  <Taskbar>
    <Apps>
      {apps.map((a) => <AppButton key={a.name} $state={a.state} aria-label={a.name}>{a.art}</AppButton>)}
    </Apps>
    <Tray>
      <TrayItem aria-label="Hidden icons">{stroke("M3 10.500L8 5.500l5 5", 16, 1.5)}</TrayItem>
      <TrayItem $gap={16} aria-label="OneDrive">
        <Svg width="16" height="16" viewBox="0 0 16 16"><path d="M3 11a3 3 0 0 1 0-6Q5 1.500 9 2.500 12.500 3 13 7v4z" fill="#8f8f8f" /><path d="M3 11a3 3 0 0 1-.5-5q4 0 7 5z" fill="#dcdcdc" /><circle cx="11.500" cy="11" r="4.500" fill="#d8232f" /><path d="M9.800 9.300l3.400 3.400M13.200 9.300l-3.400 3.400" stroke="#fff" strokeWidth="1.3" /></Svg>
      </TrayItem>
      <TrayItem $w={24} $gap={18} aria-label="Language">IND</TrayItem>
      <TrayItem $gap={18} aria-label="Network">
        <Svg width="16" height="16" viewBox="0 0 16 16" fill="none" stroke="#fff" strokeWidth="1.2"><path d="M.5 6.500Q8-.5 15.500 6.500M2.800 9Q8 4 13.200 9M5 11.300Q8 8.500 11 11.300" /><circle cx="8" cy="12.800" r="1" fill="#fff" /></Svg>
      </TrayItem>
      <TrayItem $gap={8} aria-label="Volume">{stroke("M1 6h2.500L7.500 2.500v11L3.500 10H1zM9.500 5.500Q11 8 9.500 10.500M11.500 4q2.500 4 0 8M13.500 2.500q3.500 5.500 0 11", 16, 1.1)}</TrayItem>
      <TrayItem $gap={8} aria-label="Battery">
        <Svg width="16" height="16" viewBox="0 0 16 16" fill="none" stroke="#fff" strokeWidth="1.2"><path d="M8.500 4H13.500v8.500H2.500V10M15.200 6.500v3.500" /><path d="M1 7Q0 2 6 .8 7.500 7 3 7.500z" fill="#fff" /></Svg>
      </TrayItem>
      <Clock>20.54<br />13/06/2024</Clock>
      <TrayItem aria-label="Notifications">
        <Svg width="16" height="16" viewBox="0 0 16 16" fill="#eebdf2"><path d="M2 12q1-1 1-6a5 5 0 0 1 10 0q0 5 1.500 6.500H1.500zM5.500 13.800h5q-2.500 3-5 0z" /></Svg>
      </TrayItem>
      <TrayItem $w={24} $h={24} $gap={16} aria-label="Copilot">
        <Svg width="24" height="24" viewBox="0 0 24 24">
          <path d="M6 1h9l-4 15H3q-3 0-2-4z" fill="#2b8fe6" /><path d="M2 9h7l-2 8H3q-3-1-1-8z" fill="#7dbd3e" /><path d="M11 1h4q3 0 3 5h-6z" fill="#1b5fc4" />
          <path d="M15 6h6q3 0 2 4l-2 8h-8z" fill="#b156e0" /><path d="M13 12h9l-1 6h-9z" fill="#f0618a" />
          <rect x="5" y="16" width="18" height="7.500" rx="2" fill="#fdc913" />
          <text x="14" y="22" textAnchor="middle" fontFamily="Open Sans, sans-serif" fontWeight="700" fontSize="6" fill="#222">PRE</text>
        </Svg>
      </TrayItem>
    </Tray>
  </Taskbar>
);

export default function App() {
  return (
    <Screen>
      <GlobalStyle />
      <BrowserChrome />
      <Body>
        <Navigation />
        <MainPanel />
      </Body>
      <WindowsTaskbar />
    </Screen>
  );
}
